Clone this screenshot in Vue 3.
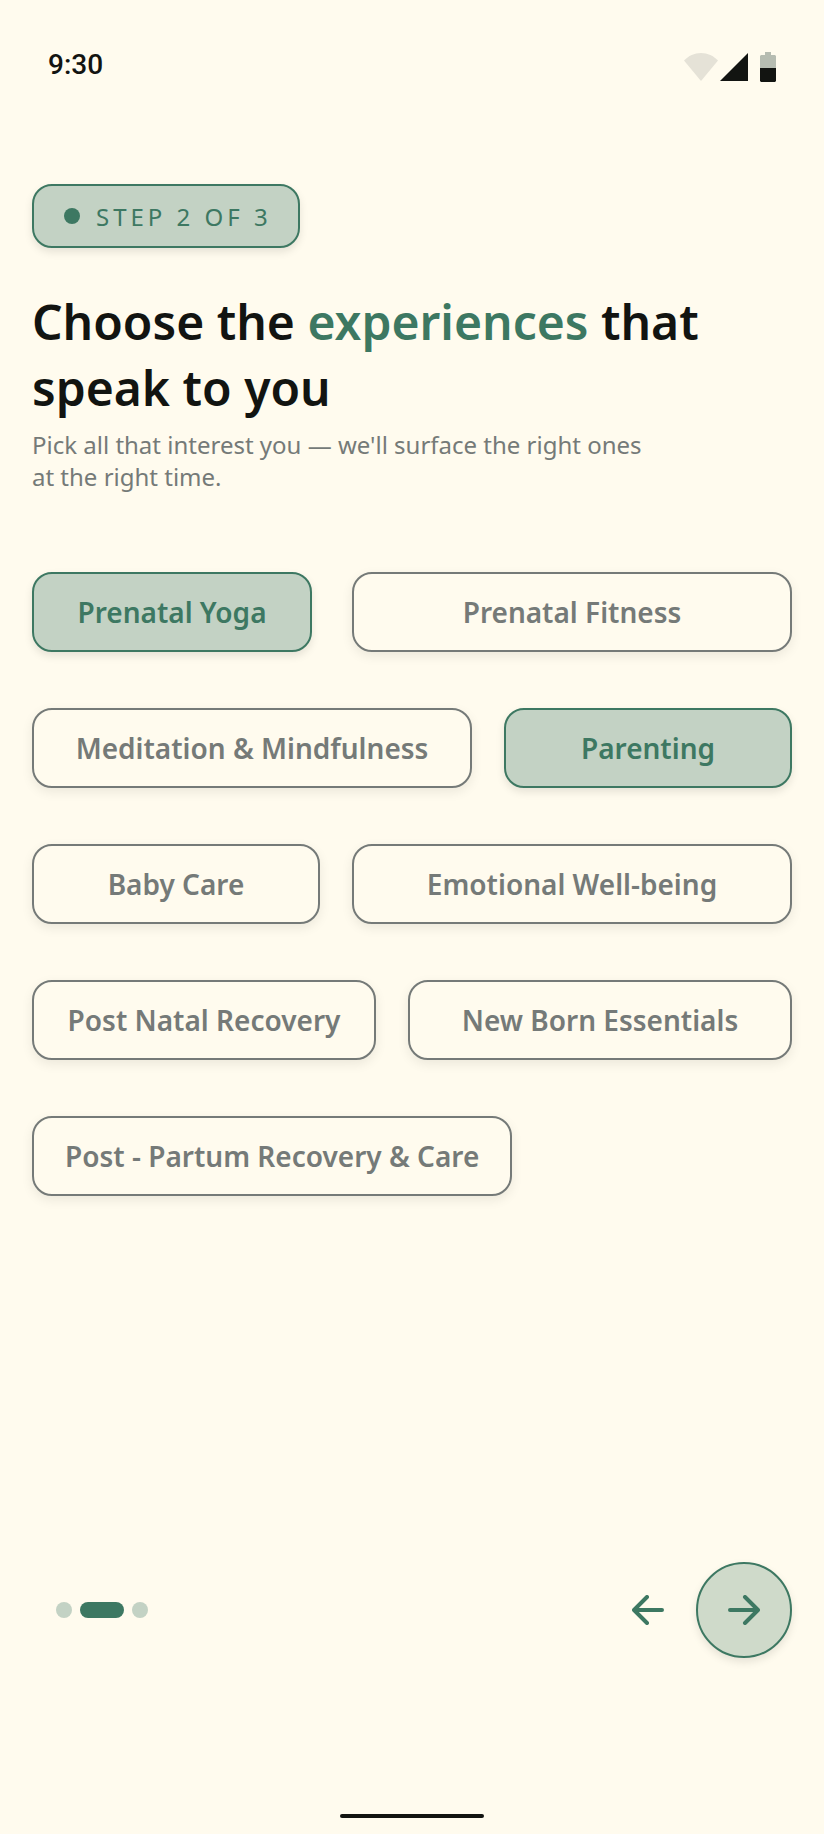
<template>
  <div class="screen">
    <header class="status">
      <span class="time">9:30</span>
      <div class="statusIcons">
        <svg class="wifi" width="34" height="28" viewBox="0 0 34 28">
          <path d="M17 28L0 7.6C4.4 2.8 10.4 0 17 0s12.6 2.8 17 7.6z" fill="#e5e2d7" />
        </svg>
        <svg class="signal" width="28" height="28" viewBox="0 0 28 28">
          <path d="M0 28L28 0v28z" fill="#121411" />
        </svg>
        <svg class="battery" width="16" height="30" viewBox="0 0 16 30">
          <path d="M5 0h6v3h4l1 1v12H0V4l1-1h4z" fill="#b6bcb1" />
          <path d="M0 16h16v13l-1 1H1l-1-1z" fill="#121411" />
        </svg>
      </div>
    </header>

    <main class="content">
      <div class="badge">
        <span class="badgeDot"></span>
        <span class="badgeText">STEP {{ step }} OF {{ totalSteps }}</span>
      </div>
      <h1>Choose the <span class="accent">experiences</span> that speak to you</h1>
      <p class="intro">Pick all that interest you — we'll surface the right ones at the right time.</p>

      <div class="choices">
        <div
          v-for="(row, index) in rows"
          :key="index"
          class="row"
          :class="{ wide: index === 0 }"
          :style="{ gridTemplateColumns: row.columns }"
        >
          <button
            v-for="name in row.names"
            :key="name"
            type="button"
            class="chip"
            :class="{ selected: selected.includes(name) }"
            :aria-pressed="selected.includes(name)"
            @click="toggle(name)"
          >
            {{ name }}
          </button>
        </div>
      </div>
    </main>

    <footer class="footer">
      <div class="dots">
        <span v-for="n in totalSteps" :key="n" class="dot" :class="{ active: n === step }"></span>
      </div>
      <div class="nav">
        <button type="button" class="back" aria-label="Back" @click="previous">
          <svg width="32" height="30" viewBox="0 0 32 30">
            <path d="M30 15H2.5M15 2L2 15l13 13" />
          </svg>
        </button>
        <button type="button" class="next" aria-label="Next" @click="next">
          <svg width="32" height="30" viewBox="0 0 32 30">
            <path d="M2 15h27.5M17 2l13 13-13 13" />
          </svg>
        </button>
      </div>
    </footer>
    <div class="homeBar"></div>
  </div>
</template>

<script setup>
import { ref } from "vue";

const totalSteps = 3;
const step = ref(2);
const selected = ref(["Prenatal Yoga", "Parenting"]);

const rows = [
  { columns: "7fr 11fr", names: ["Prenatal Yoga", "Prenatal Fitness"] },
  { columns: "55fr 36fr", names: ["Meditation & Mindfulness", "Parenting"] },
  { columns: "36fr 55fr", names: ["Baby Care", "Emotional Well-being"] },
  { columns: "43fr 48fr", names: ["Post Natal Recovery", "New Born Essentials"] },
  { columns: "max-content", names: ["Post - Partum Recovery & Care"] },
];

function toggle(name) {
  if (selected.value.includes(name)) {
    selected.value = selected.value.filter((n) => n !== name);
  } else {
    selected.value.push(name);
  }
}
function previous() {
  if (step.value > 1) step.value--;
}
function next() {
  if (step.value < totalSteps) step.value++;
}
</script>

<style>
body {
  margin: 0;
  background: #fffbee;
}
</style>

<style scoped>
.screen {
  min-height: 100vh;
  box-sizing: border-box;
  display: flex;
  flex-direction: column;
  background: #fffbee;
  color: #121411;
  font-family: "Noto Sans", sans-serif;
}
.status {
  display: flex;
  align-items: flex-start;
  justify-content: space-between;
  padding: 52px 48px 6px;
}
.time {
  font-family: Roboto, sans-serif;
  font-weight: 500;
  font-size: 28px;
  line-height: 26px;
}
.statusIcons {
  display: flex;
  align-items: center;
}
.signal {
  margin: 0 12px 0 2px;
}
.content {
  padding: 96px 32px 0;
}
.badge {
  display: flex;
  align-items: center;
  gap: 16px;
  width: fit-content;
  height: 64px;
  box-sizing: border-box;
  padding: 0 26px 0 30px;
  border: 2px solid #3d7862;
  border-radius: 20px;
  background: #c3d2c4;
  color: #3d7862;
  box-shadow: 0 4px 8px rgba(0, 0, 0, 0.1);
}
.badgeDot {
  width: 16px;
  height: 16px;
  border-radius: 50%;
  background: #3d7862;
}
.badgeText {
  font-size: 24px;
  line-height: 33px;
  letter-spacing: 4px;
}
h1 {
  margin: 41px 0 0;
  font-size: 48px;
  line-height: 66px;
  font-weight: 600;
}
.accent {
  color: #3d7862;
}
.intro {
  margin: 8px 0 0;
  max-width: 624px;
  font-size: 24px;
  line-height: 32px;
  color: #757a78;
}
.choices {
  display: flex;
  flex-direction: column;
  gap: 56px;
  margin-top: 79px;
}
.row {
  display: grid;
  gap: 32px;
}
.row.wide {
  gap: 40px;
}
.chip {
  height: 80px;
  box-sizing: border-box;
  padding: 0 31px;
  border: 2px solid #757a78;
  border-radius: 20px;
  background: #fffbee;
  color: #757a78;
  font-family: inherit;
  font-size: 28px;
  line-height: 40px;
  font-weight: 600;
  white-space: nowrap;
  cursor: pointer;
  box-shadow: 0 4px 12px rgba(0, 0, 0, 0.08);
}
.chip.selected {
  border-color: #3d7862;
  background: #c3d2c4;
  color: #3d7862;
  box-shadow: 0 4px 8px rgba(0, 0, 0, 0.1);
}
.footer {
  display: flex;
  align-items: center;
  justify-content: space-between;
  margin-top: auto;
  padding: 40px 32px 156px 56px;
}
.dots {
  display: flex;
  gap: 8px;
}
.dot {
  width: 16px;
  height: 16px;
  border-radius: 8px;
  background: #c3d2c4;
}
.dot.active {
  width: 44px;
  background: #3d7862;
}
.nav {
  display: flex;
  align-items: center;
  gap: 32px;
}
.nav button {
  display: flex;
  align-items: center;
  justify-content: center;
  padding: 0;
  border: none;
  background: none;
  cursor: pointer;
}
.nav svg {
  fill: none;
  stroke: #3d7862;
  stroke-width: 4;
  stroke-linecap: round;
  stroke-linejoin: round;
}
.nav .next {
  width: 96px;
  height: 96px;
  box-sizing: border-box;
  border: 2px solid #3d7862;
  border-radius: 50%;
  background: #cfdaca;
  box-shadow: 0 4px 8px rgba(0, 0, 0, 0.1);
}
.homeBar {
  width: 144px;
  height: 4px;
  margin: 0 auto 16px;
  border-radius: 2px;
  background: #121411;
}
</style>
